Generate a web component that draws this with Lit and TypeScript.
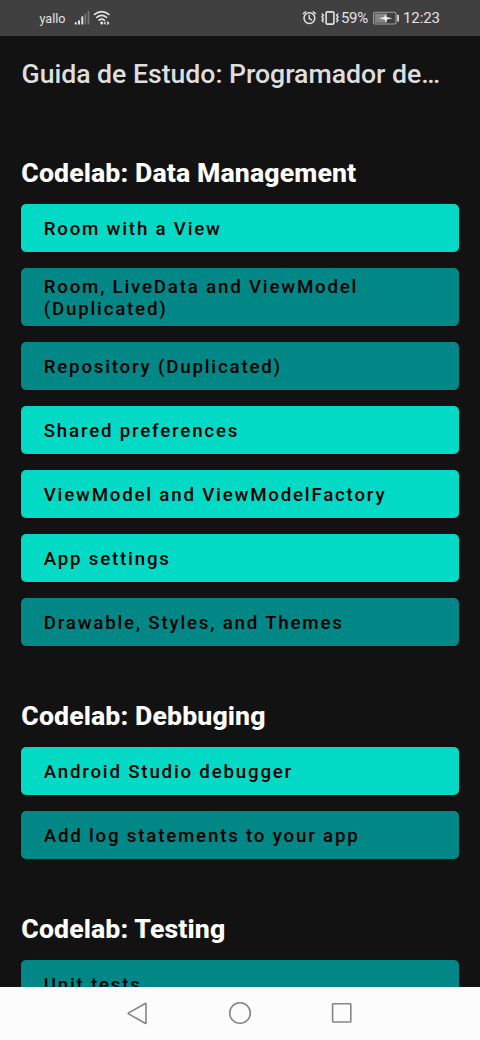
import { LitElement, html, css } from "lit";
import { customElement, property } from "lit/decorators.js";

interface Lesson { label: string; done?: boolean; }
interface Section { title: string; lessons: Lesson[]; }

const SECTIONS: Section[] = [
  {
    title: "Codelab: Data Management",
    lessons: [
      { label: "Room with a View" },
      { label: "Room, LiveData and ViewModel (Duplicated)", done: true },
      { label: "Repository (Duplicated)", done: true },
      { label: "Shared preferences" },
      { label: "ViewModel and ViewModelFactory" },
      { label: "App settings" },
      { label: "Drawable, Styles, and Themes", done: true },
    ],
  },
  {
    title: "Codelab: Debbuging",
    lessons: [
      { label: "Android Studio debugger" },
      { label: "Add log statements to your app", done: true },
    ],
  },
  { title: "Codelab: Testing", lessons: [{ label: "Unit tests", done: true }] },
];

@customElement("status-bar")
class StatusBar extends LitElement {
  static styles = css`
    :host { display: flex; flex: none; box-sizing: border-box; height: 36px; padding: 0 39px 0 39.5px; align-items: center;
      background: #404040; color: #e2e2e2; font-family: Roboto, sans-serif; }
    svg { display: block; flex: none; }
    .carrier { font-size: 12.6px; line-height: 16px; width: 34.5px; padding-top: 1px; }
    .right { display: flex; align-items: center; margin-left: auto; }
    .status { margin-right: 1px; }
    .text { font-size: 15px; line-height: 18px; white-space: nowrap; }
    .percent { width: 31px; letter-spacing: -0.35px; }
    .clock { width: 38px; letter-spacing: -0.1px; }
  `;
  render() {
    return html`
      <span class="carrier">yallo</span>
      <svg width="37" height="18" viewBox="74.5 9 37 18" fill="none">
        <g fill="#e2e2e2">
          <rect x="75.3" y="22" width="2" height="2.6" rx=".7" />
          <rect x="78.5" y="20.3" width="2" height="4.3" rx=".7" />
          <rect x="81.8" y="16.2" width="2" height="8.4" rx=".7" />
          <rect x="85" y="13.4" width="1.8" height="11.2" rx=".7" opacity=".32" />
          <rect x="88.1" y="11" width="1.8" height="13.6" rx=".7" opacity=".32" />
        </g>
        <g stroke="#e2e2e2" stroke-width="1.7" stroke-linecap="round">
          <path d="M95 14.4q7.2-5.5 14.4 0M97.3 17.3q4.9-3.9 9.8 0M99.6 20.2q2.6-2.2 5.2 0" />
        </g>
        <circle cx="102.2" cy="23.1" r="1.5" fill="#e2e2e2" />
        <path d="M104 23.1l2-2v4zM110.2 23.1l-2.6-2.2v4.4z" fill="#e2e2e2" />
      </svg>
      <div class="right">
        <svg class="status" width="38" height="18" viewBox="302 9 38 18" fill="none" stroke="#e2e2e2" stroke-linecap="round">
          <circle cx="309.4" cy="18.1" r="5.4" stroke-width="1.5" />
          <path d="M309.2 15.2v3.2l2.3 1.4M303.4 13.6l2.2-1.9M315.4 13.6l-2.2-1.9" stroke-width="1.4" />
          <rect x="326.1" y="11.9" width="7.8" height="12.2" rx="1.2" stroke-width="1.6" />
          <path d="M322.2 14l1.2 1.5-1.4 1.6 1.4 1.6-1.4 1.6 1.2 1.5M337.8 14l-1.2 1.5 1.4 1.6-1.4 1.6 1.4 1.6-1.2 1.5" stroke-width="1.4" />
        </svg>
        <span class="text percent">59%</span>
        <svg width="31" height="18" viewBox="372 9 31 18">
          <rect x="373.6" y="12.2" width="22.4" height="11.8" rx="1.5" fill="none" stroke="#a0a0a0" stroke-width="1.1" />
          <rect x="375" y="13.5" width="12" height="9.2" fill="#858585" />
          <path d="M379 18.2l5.4-1.2 .7-3 1.2 3 6 1.2-5.4 1.3-.9 2.9-1.4-2.9z" fill="#f2f2f2" />
          <rect x="397.2" y="14.8" width="1.7" height="6.8" rx=".5" fill="#e2e2e2" />
        </svg>
        <span class="text clock">12:23</span>
      </div>`;
  }
}

@customElement("lesson-button")
class LessonButton extends LitElement {
  @property() label = "";
  @property({ type: Boolean, reflect: true }) done = false;
  static styles = css`
    :host { display: block; }
    .button { display: flex; align-items: center; width: 100%; min-height: 48px; box-sizing: border-box;
      padding: 8px 22px 6px 22.4px; border: 0; border-radius: 5px; background: #03dac6; color: #000; text-align: left;
      font: 480 18.67px/22px Roboto, sans-serif; letter-spacing: 1.82px; box-shadow: 0 1px 2px rgba(0, 0, 0, 0.5); }
    :host([done]) .button { background: #018786; }
  `;
  render() {
    return html`<button class="button"><span>${this.label}</span></button>`;
  }
}

@customElement("nav-bar")
class NavBar extends LitElement {
  static styles = css`
    :host { display: flex; flex: none; box-sizing: border-box; height: 53.5px; align-items: center;
      justify-content: center; gap: 78px; background: #fcfcfc; }
    svg { display: block; fill: none; stroke: #858585; stroke-width: 1.6; }
  `;
  render() {
    return html`
      <svg width="24" height="24" viewBox="0 0 24 24"><path d="M20 2.9v19q0 .9-.8.4L2.6 12.9q-.8-.5 0-1L19.2 2.5q.8-.4.8.4z" /></svg>
      <svg width="24" height="24" viewBox="0 0 24 24"><circle cx="12" cy="12" r="10.3" /></svg>
      <svg width="24" height="24" viewBox="0 0 24 24"><rect x="2.6" y="2.8" width="18.2" height="18.2" rx=".7" /></svg>`;
  }
}

@customElement("app-root")
class AppRoot extends LitElement {
  static styles = css`
    :host { display: flex; flex-direction: column; height: 1040px; overflow: hidden; background: #121212;
      font-family: Roboto, sans-serif; }
    .title { flex: none; margin: 0; padding: 22px 21.5px 0; height: 99px; box-sizing: border-box; color: #dedede;
      font-size: 26.67px; line-height: 32px; font-weight: 500; white-space: nowrap; letter-spacing: -0.03px; }
    .list { flex: 1; min-height: 0; overflow: hidden; display: flex; flex-direction: column; gap: 54.3px;
      padding: 22px 21.33px 0; }
    .section { display: flex; flex-direction: column; gap: 15.95px; flex: none; }
    .heading { margin: 0 0 -0.95px; color: #fff; font-size: 26.67px; line-height: 32px; font-weight: 800;
      letter-spacing: 0.11px; white-space: nowrap; }
  `;
  render() {
    return html`
      <status-bar></status-bar>
      <h1 class="title">Guida de Estudo: Programador de…</h1>
      <main class="list">
        ${SECTIONS.map((s) => html`
          <section class="section">
            <h2 class="heading">${s.title}</h2>
            ${s.lessons.map((l) => html`<lesson-button .label=${l.label} ?done=${l.done}></lesson-button>`)}
          </section>`)}
      </main>
      <nav-bar></nav-bar>`;
  }
}
